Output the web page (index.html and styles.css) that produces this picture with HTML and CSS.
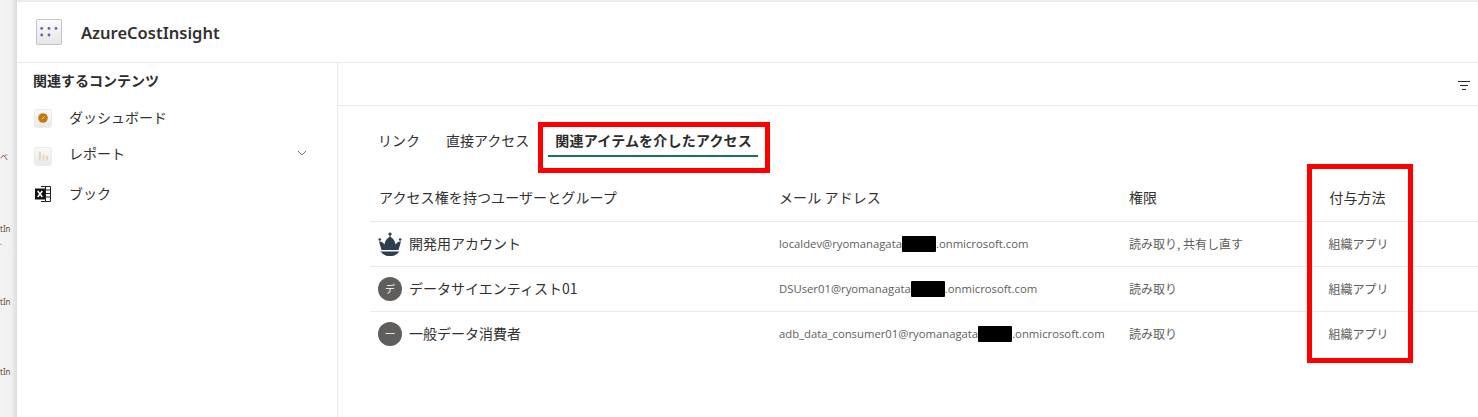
FILE: index.html
```html
<!DOCTYPE html>
<html lang="ja">
<head>
<meta charset="utf-8">
<title>AzureCostInsight</title>
<link rel="stylesheet" href="styles.css">
</head>
<body>
<div class="shell">
  <div class="gutter">
    <span class="frag frag-a">ベ</span>
    <span class="frag frag-b">tIn</span>
    <span class="frag frag-dot">.</span>
    <span class="frag frag-c">tIn</span>
    <span class="frag frag-d">tIn</span>
  </div>
  <div class="panel">
    <header class="head">
      <span class="tile">
        <svg width="26" height="26" viewBox="0 0 26 26"><g fill="#7a55b5"><circle cx="5.7" cy="9.4" r="1.4"/><circle cx="13" cy="9.4" r="1.4"/><circle cx="20" cy="9.4" r="1.4"/><circle cx="5.7" cy="16" r="1.4"/><circle cx="13" cy="16" r="1.4"/></g></svg>
      </span>
      <h1 class="title">AzureCostInsight</h1>
    </header>
    <div class="body">
      <aside class="side">
        <h2 class="side-title">関連するコンテンツ</h2>
        <div class="nav nav-dash">
          <span class="mini">
            <svg width="16" height="16" viewBox="0 0 16 16"><circle cx="8" cy="8" r="4.8" fill="#c27c0e"/><path d="M6.800 9.200 9.400 6.600" stroke="#f0d49c" stroke-width="1"/></svg>
          </span>
          <span class="nav-text">ダッシュボード</span>
        </div>
        <div class="nav nav-report">
          <span class="mini">
            <svg width="16" height="16" viewBox="0 0 16 16"><g fill="#e5d6bd"><rect x="4" y="3.500" width="2" height="9"/><rect x="7.500" y="6.500" width="2" height="6"/><rect x="11" y="8" width="2" height="4.500"/></g></svg>
          </span>
          <span class="nav-text">レポート</span>
          <svg class="chev" width="10" height="6" viewBox="0 0 10 6"><path d="M1 1 5 5 9 1" fill="none" stroke="#6b7a86" stroke-width="1"/></svg>
        </div>
        <div class="nav nav-book">
          <svg class="xl" width="16" height="16" viewBox="0 0 16 16"><path d="M6 .5h9.500v15H6M6 4h9.500M6 7.500h9.500M6 11h9.500M10.500 .5v15" fill="none" stroke="#222" stroke-width="1"/><rect x="0" y="2.500" width="10" height="11" fill="#111"/><path d="M2.700 5 7.300 11M7.300 5 2.700 11" stroke="#fff" stroke-width="1.500"/></svg>
          <span class="nav-text">ブック</span>
        </div>
      </aside>
      <main class="main">
        <div class="toolbar">
          <svg width="12" height="10" viewBox="0 0 12 10"><path d="M0 .5h12M2 4.500h8M4 8.500h4" stroke="#2b2b2b" stroke-width="1"/></svg>
        </div>
        <div class="content">
          <nav class="tabs">
            <span class="tab">リンク</span>
            <span class="tab">直接アクセス</span>
            <span class="tab tab-on">関連アイテムを介したアクセス</span>
            <span class="mark mark-tab"></span>
          </nav>
          <div class="table">
            <span class="mark mark-col"></span>
            <div class="row row-head">
              <div class="cell">アクセス権を持つユーザーとグループ</div>
              <div class="cell">メール アドレス</div>
              <div class="cell">権限</div>
              <div class="cell cell-how cell-how-head">付与方法</div>
            </div>
            <div class="row">
              <div class="cell who">
                <svg class="avatar" width="24" height="24" viewBox="0 0 24 24"><path d="M12 .5v4M10.300 2h3.400" stroke="#2d3e50" stroke-width="1.500"/><circle cx="1.800" cy="7.500" r="1.300" fill="#2d3e50"/><circle cx="22.200" cy="7.500" r="1.300" fill="#2d3e50"/><path d="M1 9.500c2.500-.5 4.500 1 5.500 3C6.800 9 9 6 12 4.500c3 1.500 5.200 4.500 5.500 8 1-2 3-3.500 5.500-3l-2.500 8.500h-17z" fill="#2d3e50"/><path d="M2.500 19.500h19a12 12 0 0 1-19 0z" fill="#2d3e50"/></svg>
                <span class="who-name">開発用アカウント</span>
              </div>
              <div class="cell mail">localdev@ryomanagata<span class="redact"></span>.onmicrosoft.com</div>
              <div class="cell small">読み取り, 共有し直す</div>
              <div class="cell small cell-how">組織アプリ</div>
            </div>
            <div class="row">
              <div class="cell who">
                <span class="avatar disc">デ</span>
                <span class="who-name">データサイエンティスト01</span>
              </div>
              <div class="cell mail">DSUser01@ryomanagata<span class="redact"></span>.onmicrosoft.com</div>
              <div class="cell small">読み取り</div>
              <div class="cell small cell-how">組織アプリ</div>
            </div>
            <div class="row">
              <div class="cell who">
                <span class="avatar disc">一</span>
                <span class="who-name">一般データ消費者</span>
              </div>
              <div class="cell mail">adb_data_consumer01@ryomanagata<span class="redact"></span>.onmicrosoft.com</div>
              <div class="cell small">読み取り</div>
              <div class="cell small cell-how">組織アプリ</div>
            </div>
          </div>
        </div>
      </main>
    </div>
  </div>
</div>
</body>
</html>
```
FILE: styles.css
```css
* { box-sizing: border-box; }
html, body { margin: 0; height: 100%; }
body {
  font-family: "Noto Sans CJK JP", "Noto Sans", sans-serif;
  color: #323130;
  background: #fff;
  overflow: hidden;
}
.shell { display: flex; height: 417px; background: #ececec; }
.gutter {
  width: 17px;
  flex: none;
  display: flex;
  flex-direction: column;
  align-items: flex-start;
  background: linear-gradient(to right, #f3f3f3 0, #f1f1f1 11px, #dcdcdc 17px);
  font-family: "Noto Sans", sans-serif;
  font-size: 8px;
  line-height: 12px;
  color: #6f4a35;
}
.frag { white-space: nowrap; }
.frag-a { margin-top: 151px; font-family: "Noto Sans CJK JP", sans-serif; }
.frag-b { margin-top: 60px; }
.frag-dot { margin-top: 1px; }
.frag-c { margin-top: 48px; }
.frag-d { margin-top: 58px; }
.panel { flex: 1; display: flex; flex-direction: column; margin-top: 2px; min-width: 0; background: #fff; }
.head {
  height: 61px;
  flex: none;
  display: flex;
  align-items: center;
  padding: 0 0 0 19px;
  gap: 19px;
  border-bottom: 1px solid #e9e9e9;
}
.tile {
  width: 26px;
  height: 26px;
  display: block;
  border: 1px solid #c4c4c4;
  border-radius: 2px;
  background: linear-gradient(#fbfbfb, #e6e6e6);
  margin-top: -1px;
}
.tile svg { display: block; margin: -1px; }
.title {
  margin: 1px 0 0;
  font-family: "Noto Sans", sans-serif;
  font-size: 16.5px;
  font-weight: 600;
  color: #323130;
}
.body { flex: 1; display: flex; min-height: 0; }
.side { width: 321px; flex: none; border-right: 1px solid #e9e9e9; padding-left: 16px; }
.side-title { margin: 7px 0 0; font-size: 14px; line-height: 20px; font-weight: 700; color: #2b2b2b; }
.nav { display: flex; align-items: center; height: 20px; padding-left: 2px; font-size: 14px; color: #323130; }
.nav-dash { margin-top: 17px; }
.nav-report { margin-top: 16px; }
.nav-book { margin-top: 20px; }
.nav-text { margin-left: 18px; line-height: 20px; }
.mini {
  width: 16px;
  height: 17px;
  flex: none;
  align-self: flex-start;
  margin-top: 3px;
  border-radius: 2px;
  background: linear-gradient(#f9f9f9, #e9e9e9);
  box-shadow: 0 0 0 1px #ececec;
}
.nav-report .mini { margin-top: 5px; }
.mini svg { display: block; }
.xl { display: block; flex: none; margin-top: 2px; }
.chev { margin-left: auto; margin-right: 30px; }
.main { flex: 1; min-width: 0; }
.toolbar {
  height: 43px;
  display: flex;
  align-items: center;
  justify-content: flex-end;
  padding: 3px 8px 0 0;
  border-bottom: 1px solid #e9e9e9;
}
.content { padding-left: 32px; }
.tabs { position: relative; display: flex; height: 69px; padding-top: 23px; font-size: 14px; line-height: 22px; }
.tab { padding: 0 8px; margin-right: 10px; height: 28px; }
.tab-on { font-weight: 700; color: #2b2b2b; border-bottom: 2px solid #1a7362; padding: 0 7px; margin-left: 1px; width: 210px; white-space: nowrap; letter-spacing: .2px; }
.mark { position: absolute; border: 5px solid #ff0000; pointer-events: none; }
.mark-tab { left: 168px; top: 16px; width: 232px; height: 51px; }
.table { position: relative; }
.mark-col { left: 937px; top: -11px; width: 106px; height: 199px; }
.row {
  display: grid;
  grid-template-columns: 400px 350px 179px 120px 1fr;
  align-items: center;
  height: 45px;
  border-bottom: 1px solid #e9e9e9;
}
.row:last-child { border-bottom: 0; height: 44px; }
.row-head { height: 47px; font-size: 14px; letter-spacing: .1px; }
.cell { padding-left: 9px; min-width: 0; white-space: nowrap; padding-bottom: 2px; }
.cell-how { padding-left: 0; text-align: center; margin-left: -1px; }
.cell-how-head { margin-left: -3px; }
.who { display: flex; align-items: center; gap: 7px; padding: 0 0 0 8px; font-size: 14px; }
.who-name { margin-top: -2px; }
.avatar { width: 24px; height: 24px; flex: none; display: block; }
.disc {
  border-radius: 50%;
  background: #605e5c;
  color: #fff;
  font-size: 10px;
  line-height: 24px;
  text-align: center;
}
.mail { font-family: "Open Sans", sans-serif; font-size: 11.3px; padding-left: 9px; color: #605e5c; display: flex; align-items: center; }
.small { font-size: 12px; color: #605e5c; }
.redact { display: block; width: 34px; height: 16px; margin-top: 2px; background: #000; border-radius: 1px; flex: none; }
```
